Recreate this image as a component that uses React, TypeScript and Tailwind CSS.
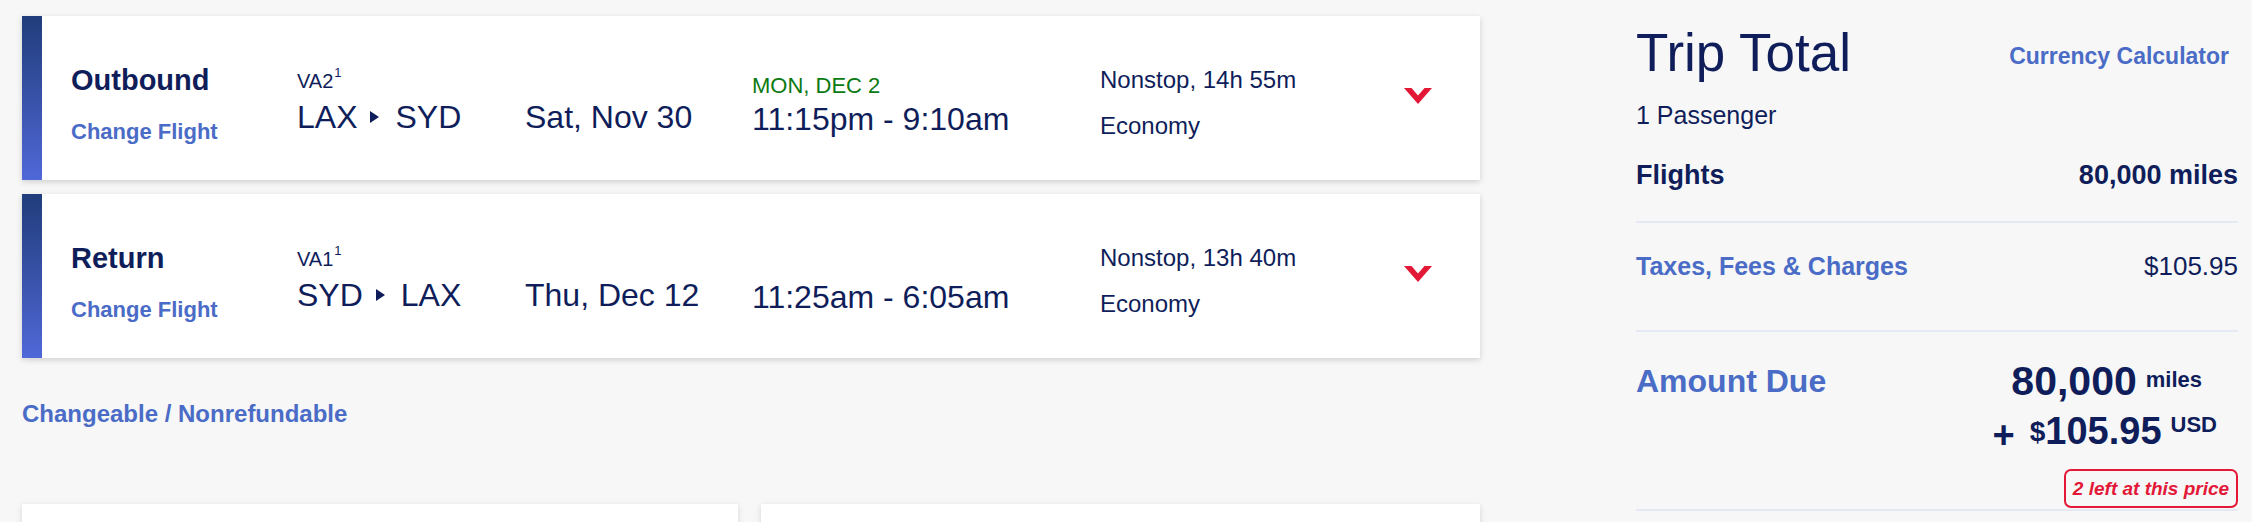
import React from "react";

const NAVY = "text-[#0f1e5a]";

function Chevron() {
  return (
    <svg width="28" height="16" viewBox="0 0 28 16" className="block">
      <path d="M0 0 H7.5 L14 7.5 L20.5 0 H28 L14 16 Z" fill="#e31837" />
    </svg>
  );
}

function Tri() {
  return (
    <svg width="9" height="12" viewBox="0 0 9 12" className="block">
      <path d="M0 0 L9 6 L0 12 Z" fill="#0f1e5a" />
    </svg>
  );
}

type CardProps = {
  label: string;
  flight: string;
  from: string;
  to: string;
  date: string;
  nextDay?: string;
  time: string;
  duration: string;
};

function FlightCard({ label, flight, from, to, date, nextDay, time, duration }: CardProps) {
  return (
    <div className="flex shrink-0 h-[164px] bg-white shadow-[0_2px_6px_rgba(0,0,0,0.16)]">
      <div className="w-[20px] shrink-0 bg-gradient-to-b from-[#213d7b] to-[#5068d8]" />
      <div className="w-[255px] shrink-0 pl-[29px] flex flex-col">
        <div className={`mt-[50px] text-[29px] leading-none font-bold ${NAVY}`}>{label}</div>
        <div className="mt-[26px] text-[22px] leading-none font-bold text-[#4a6cc6]">Change Flight</div>
      </div>
      <div className={`w-[228px] shrink-0 flex flex-col ${NAVY}`}>
        <div className="mt-[55px] text-[20px] leading-none">
          {flight}
          <span className="relative top-[-11px] ml-[1px] text-[13px]">1</span>
        </div>
        <div className="mt-[10px] text-[32px] leading-none flex items-center">
          <span>{from}</span>
          <span className="ml-[13px] mr-[16px]">
            <Tri />
          </span>
          <span>{to}</span>
        </div>
      </div>
      <div className={`w-[227px] shrink-0 ${NAVY}`}>
        <div className="mt-[85px] text-[32px] leading-none">{date}</div>
      </div>
      <div className={`w-[348px] shrink-0 flex flex-col ${NAVY}`}>
        {nextDay ? (
          <>
            <div className="mt-[59px] text-[22px] leading-none text-[#0b7a12]">{nextDay}</div>
            <div className="mt-[6px] text-[32px] leading-none">{time}</div>
          </>
        ) : (
          <div className="mt-[87px] text-[32px] leading-none">{time}</div>
        )}
      </div>
      <div className={`w-[304px] shrink-0 flex flex-col ${NAVY}`}>
        <div className="mt-[52px] text-[24px] leading-none">{duration}</div>
        <div className="mt-[22px] text-[24px] leading-none">Economy</div>
      </div>
      <div className="pt-[72px]">
        <Chevron />
      </div>
    </div>
  );
}

export default function App() {
  return (
    <div className="w-[2252px] h-[522px] overflow-hidden bg-[#f7f7f7] flex items-start font-['Liberation_Sans',Arial,sans-serif]">
      <div className="ml-[22px] w-[1458px] shrink-0 pt-[16px] flex flex-col">
        <FlightCard
          label="Outbound"
          flight="VA2"
          from="LAX"
          to="SYD"
          date="Sat, Nov 30"
          nextDay="MON, DEC 2"
          time="11:15pm - 9:10am"
          duration="Nonstop, 14h 55m"
        />
        <div className="h-[14px] shrink-0" />
        <FlightCard
          label="Return"
          flight="VA1"
          from="SYD"
          to="LAX"
          date="Thu, Dec 12"
          time="11:25am - 6:05am"
          duration="Nonstop, 13h 40m"
        />
        <div className="mt-[44px] shrink-0 text-[24px] leading-none font-bold text-[#4a6cc6]">
          Changeable / Nonrefundable
        </div>
        <div className="mt-[78px] shrink-0 flex gap-[23px]">
          <div className="w-[716px] h-[80px] bg-white shadow-[0_2px_6px_rgba(0,0,0,0.14)]" />
          <div className="w-[719px] h-[80px] bg-white shadow-[0_2px_6px_rgba(0,0,0,0.14)]" />
        </div>
      </div>

      <div className={`ml-[156px] w-[602px] shrink-0 flex flex-col ${NAVY}`}>
        <div className="flex shrink-0 justify-between items-start">
          <div className="mt-[26px] text-[53px] leading-none">Trip Total</div>
          <div className="mt-[45px] mr-[9px] text-[23px] leading-none font-bold text-[#4a6cc6]">
            Currency Calculator
          </div>
        </div>
        <div className="mt-[24px] shrink-0 text-[25px] leading-none">1 Passenger</div>
        <div className="mt-[34px] shrink-0 flex justify-between items-baseline text-[27px] leading-none font-bold">
          <span>Flights</span>
          <span>80,000 miles</span>
        </div>
        <div className="mt-[32px] shrink-0 h-[2px] bg-[#e4e9f3]" />
        <div className="mt-[30px] shrink-0 flex justify-between items-baseline leading-none">
          <span className="text-[25px] font-bold text-[#4a6cc6]">Taxes, Fees &amp; Charges</span>
          <span className="text-[26px]">$105.95</span>
        </div>
        <div className="mt-[51px] shrink-0 h-[2px] bg-[#e4e9f3]" />
        <div className="mt-[30px] shrink-0 flex justify-between items-start">
          <div className="mt-[3px] text-[32px] leading-none font-bold text-[#4a6cc6]">Amount Due</div>
          <div className="flex flex-col items-end">
            <div className="mr-[36px] flex items-start font-bold leading-none">
              <span className="mt-[-1px] text-[41px]">80,000</span>
              <span className="ml-[9px] mt-[7px] text-[22px]">miles</span>
            </div>
            <div className="mt-[10px] mr-[21px] flex items-start font-bold leading-none">
              <span className="mt-[4px] mr-[15px] text-[38px]">+</span>
              <span className="mt-[6px] text-[28px]">$</span>
              <span className="text-[38px]">105.95</span>
              <span className="ml-[9px] mt-[2px] text-[22px]">USD</span>
            </div>
            <div className="mt-[15px] h-[39px] w-[174px] rounded-[7px] border-2 border-[#e31837] flex items-center justify-center text-[19px] leading-none font-bold italic text-[#e31837]">
              2 left at this price
            </div>
          </div>
        </div>
        <div className="mt-[1px] shrink-0 h-[2px] bg-[#e4e9f3]" />
      </div>
    </div>
  );
}
